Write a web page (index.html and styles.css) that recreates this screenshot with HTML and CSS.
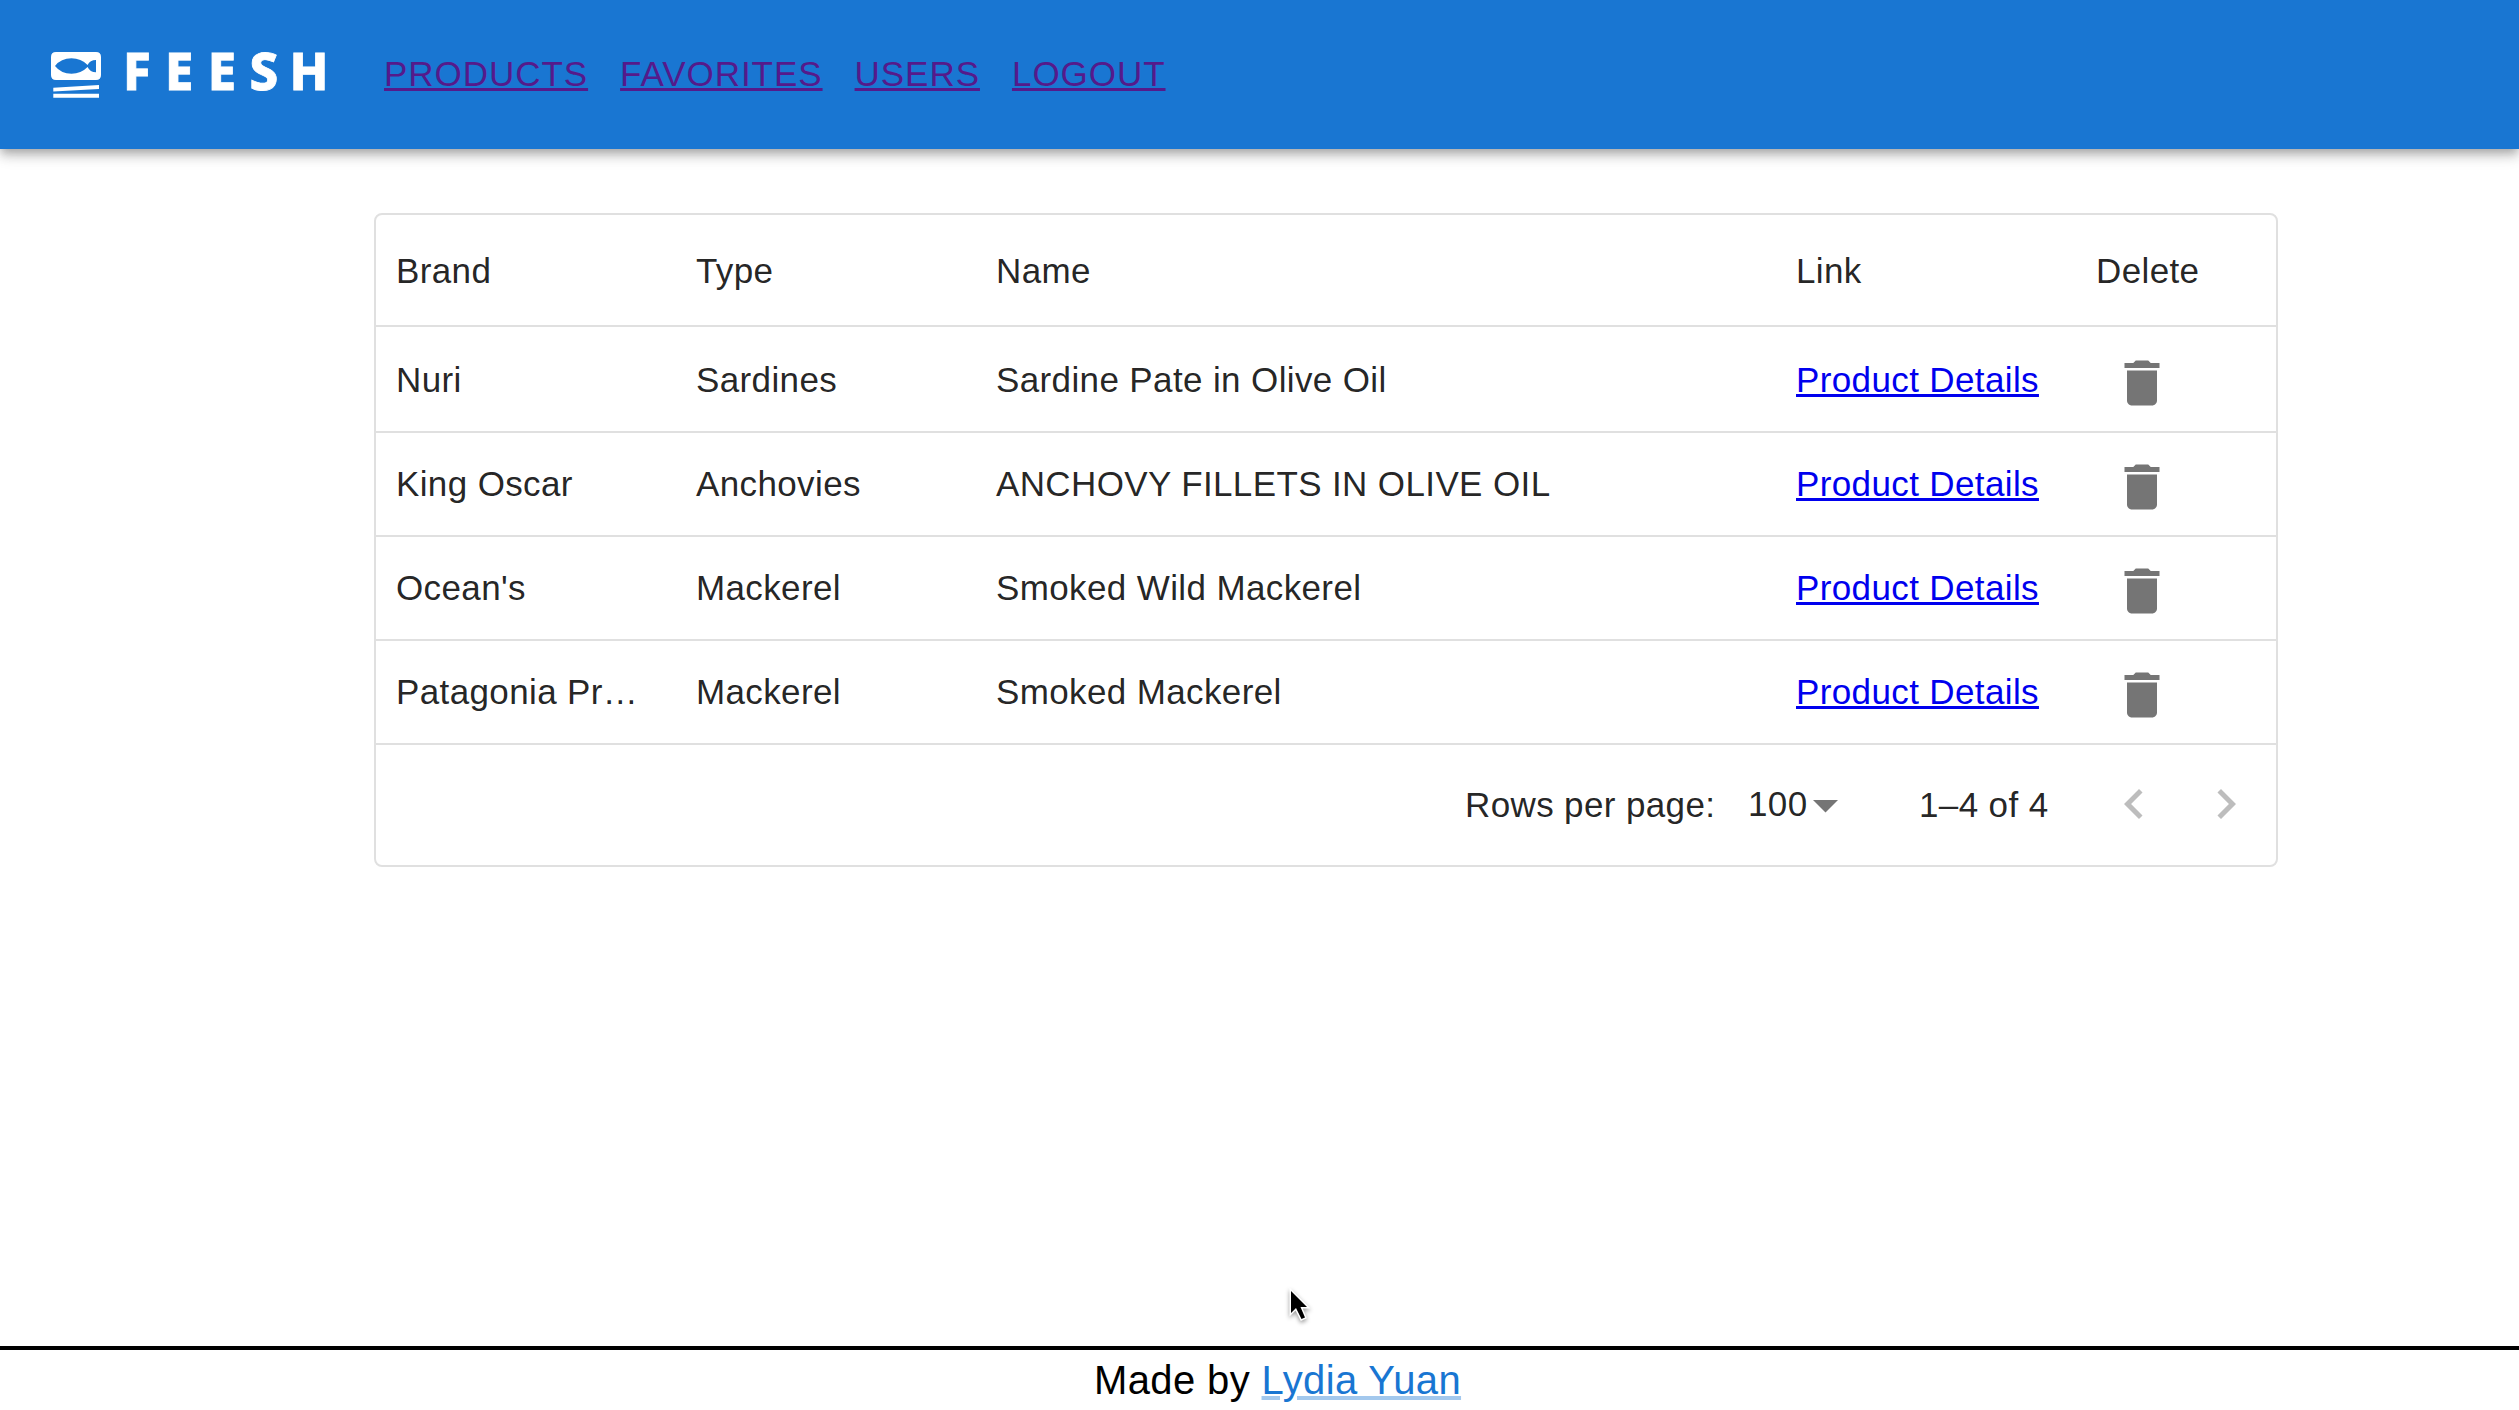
FILE: index.html
```html
<!DOCTYPE html>
<html lang="en">
<head>
<meta charset="utf-8">
<title>Feesh</title>
<link rel="stylesheet" href="styles.css">
</head>
<body>
<svg class="defs" aria-hidden="true">
  <symbol id="trash" viewBox="0 0 24 24"><path d="M6 19c0 1.1.9 2 2 2h8c1.1 0 2-.9 2-2V7H6v12zM19 4h-3.5l-1-1h-5l-1 1H5v2h14V4z"/></symbol>
</svg>
<header class="appbar">
  <a class="logo">
    <svg class="logo-icon" viewBox="0 0 50 46">
      <path fill-rule="evenodd" d="M5 0H45Q50 0 50 5V23Q50 28 45 28H5Q0 28 0 23V5Q0 0 5 0ZM4 14Q10 6.300 20.500 6.300Q30 6.300 36.600 13Q39 8 45 8V20.300Q39 20.300 36.600 15Q30 21.700 20.500 21.700Q10 21.700 4 14Z"/>
      <path d="M2.300 35.700L48 33V37L2.300 39.400ZM2.300 41.800H48V45.700H2.300Z"/>
    </svg>
    <svg class="logo-text" viewBox="0 0 220 80"><text x="2 44 86.700 128.500 168.500" y="60">FEESH</text></svg>
  </a>
  <nav class="nav">
    <a href="#">PRODUCTS</a>
    <a href="#">FAVORITES</a>
    <a href="#">USERS</a>
    <a href="#">LOGOUT</a>
  </nav>
</header>
<main class="content">
  <section class="grid">
    <div class="row head"><div>Brand</div><div>Type</div><div>Name</div><div>Link</div><div>Delete</div></div>
    <div class="row first"><div>Nuri</div><div>Sardines</div><div>Sardine Pate in Olive Oil</div><div><a class="details">Product Details</a></div><div class="action"><svg class="icon"><use href="#trash"/></svg></div></div>
    <div class="row"><div>King Oscar</div><div>Anchovies</div><div>ANCHOVY FILLETS IN OLIVE OIL</div><div><a class="details">Product Details</a></div><div class="action"><svg class="icon"><use href="#trash"/></svg></div></div>
    <div class="row"><div>Ocean's</div><div>Mackerel</div><div>Smoked Wild Mackerel</div><div><a class="details">Product Details</a></div><div class="action"><svg class="icon"><use href="#trash"/></svg></div></div>
    <div class="row"><div>Patagonia Pr…</div><div>Mackerel</div><div>Smoked Mackerel</div><div><a class="details">Product Details</a></div><div class="action"><svg class="icon"><use href="#trash"/></svg></div></div>
    <div class="pagination">
      <span class="per-page">Rows per page:</span>
      <span class="select">100</span>
      <svg class="caret" viewBox="7 10 10 5"><path d="M7 10l5 5 5-5z"/></svg>
      <span class="range">1–4 of 4</span>
      <svg class="chevron" viewBox="0 0 24 24"><path d="M15.410 16.590L10.830 12l4.580-4.590L14 6l-6 6 6 6z"/></svg>
      <svg class="chevron next" viewBox="0 0 24 24"><path d="M8.590 16.590L13.170 12 8.590 7.410 10 6l6 6-6 6z"/></svg>
    </div>
  </section>
</main>
<footer class="footer">Made by <a href="#">Lydia Yuan</a></footer>
<svg class="cursor" viewBox="0 0 24 36"><path d="M4 3V25L9 20L14.500 31L18 29.500L13.500 19H20Z"/></svg>
</body>
</html>
```
FILE: styles.css
```css
* { box-sizing: border-box; }
body {
  margin: 0;
  height: 1410px;
  display: flex;
  flex-direction: column;
  overflow: hidden;
  background: #fff;
  color: rgba(0, 0, 0, 0.87);
  font: 35px/50px "Liberation Sans", Arial, sans-serif;
  letter-spacing: 0.375px;
}
.defs { display: none; }
.appbar {
  flex: none;
  height: 149px;
  display: flex;
  align-items: flex-start;
  padding-left: 51px;
  background: #1976d2;
  box-shadow: 0 4px 8px -2px rgba(0, 0, 0, 0.2), 0 8px 10px 0 rgba(0, 0, 0, 0.14), 0 2px 20px 0 rgba(0, 0, 0, 0.12);
}
.logo { display: flex; width: 333px; color: #fff; }
.logo-icon { width: 50px; height: 46px; margin-top: 52px; fill: #fff; }
.logo-text {
  width: 220px;
  height: 80px;
  margin: 30px 0 0 20px;
  overflow: visible;
  fill: #fff;
  stroke: #fff;
  stroke-width: 0.8px;
  font: 800 51px "Noto Sans", sans-serif;
  letter-spacing: 0;
}
.nav { display: flex; gap: 32px; padding-top: 49px; letter-spacing: 0.96px; }
.nav a {
  color: #551a8b;
  text-decoration-thickness: 3px;
  text-underline-offset: 2px;
  text-decoration-skip-ink: none;
}
.content { flex: 1; padding: 64px 0 0 374px; }
.grid { width: 1904px; border: 2px solid #e0e0e0; border-radius: 8px; }
.row {
  display: grid;
  grid-template-columns: 300px 300px 800px 300px 200px;
  height: 104px;
  padding-top: 26px;
  border-bottom: 2px solid #e0e0e0;
  white-space: nowrap;
}
.row > div { padding-left: 20px; }
.row.head { height: 112px; padding-top: 31px; }
.row.first { height: 106px; padding-top: 28px; }
.details {
  color: #00e;
  text-decoration: underline;
  text-decoration-thickness: 3px;
  text-underline-offset: 2px;
  text-decoration-skip-ink: none;
}
.row > .action { padding-left: 36px; }
.icon { display: block; width: 60px; height: 60px; margin-top: -2px; fill: #757575; }
.pagination { display: flex; height: 120px; padding: 34px 0 0 1089px; white-space: nowrap; }
.per-page { width: 283px; padding-top: 1px; }
.select { width: 65px; }
.caret { width: 25px; height: 12.500px; margin: 21px 81px 0 0; fill: #757575; }
.range { width: 185px; padding-top: 1px; }
.chevron { flex: none; width: 60px; height: 60px; margin-top: -5px; fill: #bdbdbd; }
.next { margin-left: 32px; }
.footer {
  flex: none;
  height: 64px;
  padding: 5px 0 0 1094px;
  border-top: 4px solid #000;
  color: #000;
  font-size: 40px;
  line-height: 50px;
  white-space: nowrap;
}
.footer a {
  color: #1976d2;
  text-decoration-color: rgba(25, 118, 210, 0.4);
  text-decoration-thickness: 4px;
  text-underline-offset: 2px;
}
.cursor {
  position: absolute;
  left: 1287px;
  top: 1288px;
  width: 24px;
  height: 36px;
  fill: #000;
  stroke: #fff;
  stroke-width: 3px;
  paint-order: stroke;
  filter: drop-shadow(0 2px 2px rgba(0, 0, 0, 0.4));
}
```
